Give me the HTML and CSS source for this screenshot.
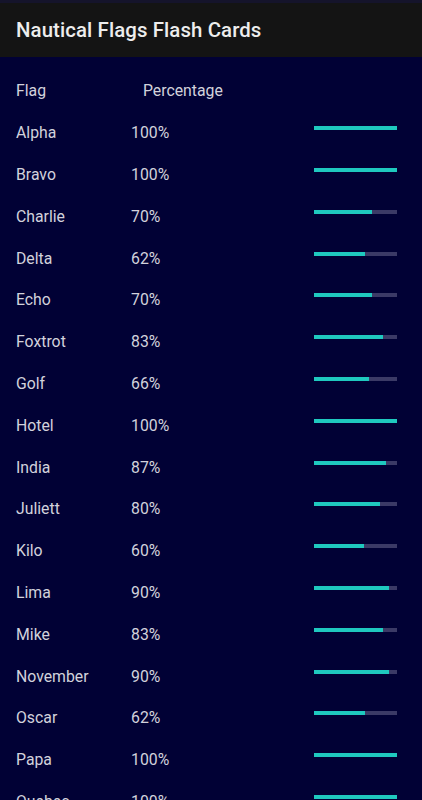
FILE: index.html
```html
<!DOCTYPE html>
<html lang="en">
<head>
    <meta charset="UTF-8">
    <title>Nautical Flags Flash Cards</title>
    <link rel="stylesheet" href="styles.css">
</head>
<body>

<!-- status bar strip above the app bar -->
<div class="statusBar"></div>

<div class="appBar">
    <h1 class="appTitle">Nautical Flags Flash Cards</h1>
</div>

<!-- score list -->
<div class="scoreList">
    <div class="headRow">
        <span class="headFlag">Flag</span>
        <span class="headPct">Percentage</span>
    </div>

    <div class="row"><span class="flagName">Alpha</span><span class="pct">100%</span><div class="track"><div class="fill" style="width: 100%"></div></div></div>
    <div class="row"><span class="flagName">Bravo</span><span class="pct">100%</span><div class="track"><div class="fill" style="width: 100%"></div></div></div>
    <div class="row"><span class="flagName">Charlie</span><span class="pct">70%</span><div class="track"><div class="fill" style="width: 70%"></div></div></div>
    <div class="row"><span class="flagName">Delta</span><span class="pct">62%</span><div class="track"><div class="fill" style="width: 62%"></div></div></div>
    <div class="row"><span class="flagName">Echo</span><span class="pct">70%</span><div class="track"><div class="fill" style="width: 70%"></div></div></div>
    <div class="row"><span class="flagName">Foxtrot</span><span class="pct">83%</span><div class="track"><div class="fill" style="width: 83%"></div></div></div>
    <div class="row"><span class="flagName">Golf</span><span class="pct">66%</span><div class="track"><div class="fill" style="width: 66%"></div></div></div>
    <div class="row"><span class="flagName">Hotel</span><span class="pct">100%</span><div class="track"><div class="fill" style="width: 100%"></div></div></div>
    <div class="row"><span class="flagName">India</span><span class="pct">87%</span><div class="track"><div class="fill" style="width: 87%"></div></div></div>
    <div class="row"><span class="flagName">Juliett</span><span class="pct">80%</span><div class="track"><div class="fill" style="width: 80%"></div></div></div>
    <div class="row"><span class="flagName">Kilo</span><span class="pct">60%</span><div class="track"><div class="fill" style="width: 60%"></div></div></div>
    <div class="row"><span class="flagName">Lima</span><span class="pct">90%</span><div class="track"><div class="fill" style="width: 90%"></div></div></div>
    <div class="row"><span class="flagName">Mike</span><span class="pct">83%</span><div class="track"><div class="fill" style="width: 83%"></div></div></div>
    <div class="row"><span class="flagName">November</span><span class="pct">90%</span><div class="track"><div class="fill" style="width: 90%"></div></div></div>
    <div class="row"><span class="flagName">Oscar</span><span class="pct">62%</span><div class="track"><div class="fill" style="width: 62%"></div></div></div>
    <div class="row"><span class="flagName">Papa</span><span class="pct">100%</span><div class="track"><div class="fill" style="width: 100%"></div></div></div>
    <div class="row"><span class="flagName">Quebec</span><span class="pct">100%</span><div class="track"><div class="fill" style="width: 100%"></div></div></div>
</div>

</body>
</html>
```

FILE: styles.css
```css
html, body {
    margin: 0;
    padding: 0;
    height: 100%;
    overflow: hidden;
    background-color: #010135;
    font-family: Roboto, "Noto Sans", sans-serif;
}

.statusBar {
    height: 3px;
    background-color: #15142b;
}

.appBar {
    height: 54px;
    background-color: #141414;
    display: flex;
    align-items: center;
    padding-left: 16px;
}

.appTitle {
    margin: 0;
    font-size: 20.4px;
    font-weight: 500;
    color: #ededed;
    letter-spacing: 0.1px;
}

.scoreList {
    padding-top: 13px;
}

.headRow, .row {
    height: 41.8px;
    display: flex;
    align-items: center;
    padding-left: 16px;
    padding-right: 25px;
    font-size: 15.8px;
    color: #d2d2dc;
}

.headFlag {
    width: 127px;
}

.flagName {
    width: 115px;
}

.pct {
    flex: 1;
}

.track {
    width: 83px;
    height: 4px;
    margin-bottom: 9px;
    background-color: #3b3a66;
}

.fill {
    height: 100%;
    background-color: #1fc9bf;
}
```
